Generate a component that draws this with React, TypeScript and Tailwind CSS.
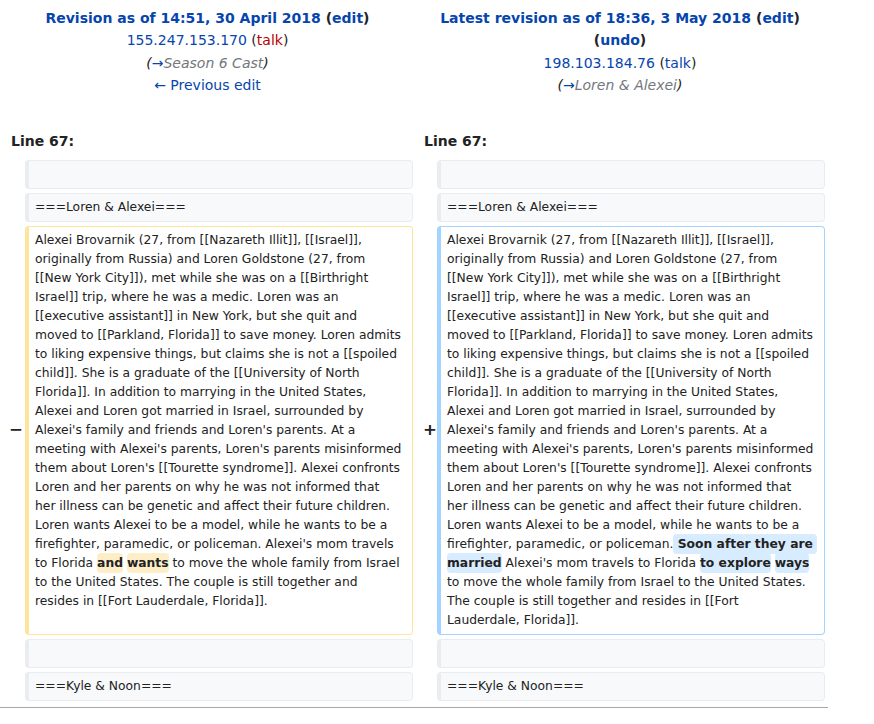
import type { ReactNode } from "react";

const LINK = "text-[#0645ad]";

const BOX =
  "rounded-[4px] border border-l-4 px-[6px] py-[4px] text-[12.32px] leading-[19px]";

function Del({ children }: { children: ReactNode }) {
  return (
    <span className="rounded-[4px] bg-[#feeec8] py-[3px] font-bold">
      {children}
    </span>
  );
}

function Ins({ children }: { children: ReactNode }) {
  return (
    <span className="rounded-[4px] bg-[#d8ecff] py-[3px] font-bold">
      {children}
    </span>
  );
}

function Context({ text }: { text?: string }) {
  return (
    <div className={`${BOX} min-h-[29px] whitespace-pre border-[#eaecf0] bg-[#f8f9fa] text-[#222]`}>
      {text}
    </div>
  );
}

// wrapped the way the wiki diff wraps them
const SHARED = [
  "Alexei Brovarnik (27, from [[Nazareth Illit]], [[Israel]],",
  "originally from Russia) and Loren Goldstone (27, from",
  "[[New York City]]), met while she was on a [[Birthright",
  "Israel]] trip, where he was a medic. Loren was an",
  "[[executive assistant]] in New York, but she quit and",
  "moved to [[Parkland, Florida]] to save money. Loren admits",
  "to liking expensive things, but claims she is not a [[spoiled",
  "child]]. She is a graduate of the [[University of North",
  "Florida]]. In addition to marrying in the United States,",
  "Alexei and Loren got married in Israel, surrounded by",
  "Alexei's family and friends and Loren's parents. At a",
  "meeting with Alexei's parents, Loren's parents misinformed",
  "them about Loren's [[Tourette syndrome]]. Alexei confronts",
  "Loren and her parents on why he was not informed that",
  "her illness can be genetic and affect their future children.",
  "Loren wants Alexei to be a model, while he wants to be a",
];

const OLD_LINES: ReactNode[] = [
  ...SHARED,
  "firefighter, paramedic, or policeman. Alexei's mom travels",
  <>
    to Florida <Del>and</Del> <Del>wants</Del> to move the whole family from Israel
  </>,
  "to the United States. The couple is still together and",
  "resides in [[Fort Lauderdale, Florida]].",
];

const NEW_LINES: ReactNode[] = [
  ...SHARED,
  <>
    firefighter, paramedic, or policeman.<Ins> Soon after they are </Ins>
  </>,
  <>
    <Ins>married</Ins> Alexei's mom travels to Florida <Ins>to explore</Ins>{" "}
    <Ins>ways</Ins>
  </>,
  "to move the whole family from Israel to the United States.",
  "The couple is still together and resides in [[Fort",
  "Lauderdale, Florida]].",
];

function Changed({ lines, border }: { lines: ReactNode[]; border: string }) {
  return (
    <div className={`${BOX} ${border} bg-white text-[#222]`}>
      {lines.map((line, i) => (
        <div key={i} className="whitespace-pre">
          {line}
        </div>
      ))}
    </div>
  );
}

export default function App() {
  return (
    <div className="min-h-[724px] w-[874px] bg-white font-['DejaVu_Sans',sans-serif] text-[#222]">
      <div className="w-[828px] border-b border-[#a2a9b1] pb-[6px]">
        <div className="grid grid-cols-[25px_388px_24px_388px] gap-y-[4px]">
          {/* revision headers */}
          <div className="col-span-2 pl-[2px] pt-[7px] text-center text-[14px] leading-[22.4px]">
            <div className="font-bold">
              <span className={LINK}>Revision as of 14:51, 30 April 2018</span> (
              <span className={LINK}>edit</span>)
            </div>
            <div>
              <span className={LINK}>155.247.153.170</span> (
              <span className="text-[#ba0000]">talk</span>)
            </div>
            <div className="italic">
              (<span className={LINK}>→</span>
              <span className="text-[#72777d]">Season 6 Cast</span>)
            </div>
            <div className={LINK}>← Previous edit</div>
          </div>
          <div className="col-span-2 pl-[2px] pt-[7px] text-center text-[14px] leading-[22.4px]">
            <div className="font-bold">
              <span className={LINK}>Latest revision as of 18:36, 3 May 2018</span> (
              <span className={LINK}>edit</span>)
            </div>
            <div className="font-bold">
              (<span className={LINK}>undo</span>)
            </div>
            <div>
              <span className={LINK}>198.103.184.76</span> (
              <span className={LINK}>talk</span>)
            </div>
            <div className="italic">
              (<span className={LINK}>→</span>
              <span className="text-[#72777d]">Loren &amp; Alexei</span>)
            </div>
          </div>

          {/* line numbers */}
          <div className="col-span-2 pb-[5px] pl-[11px] pt-[30px] text-[14px] font-bold leading-[20px]">
            Line 67:
          </div>
          <div className="col-span-2 pb-[5px] pl-[11px] pt-[30px] text-[14px] font-bold leading-[20px]">
            Line 67:
          </div>

          <div />
          <Context />
          <div />
          <Context />

          <div />
          <Context text="===Loren & Alexei===" />
          <div />
          <Context text="===Loren & Alexei===" />

          <div className="flex items-center justify-end pr-[2px] text-[16.6px] font-bold">
            −
          </div>
          <Changed lines={OLD_LINES} border="border-[#ffe49c]" />
          <div className="flex items-center justify-end text-[16.6px] font-bold">
            +
          </div>
          <Changed lines={NEW_LINES} border="border-[#a3d3ff]" />

          <div />
          <Context />
          <div />
          <Context />

          <div />
          <Context text="===Kyle & Noon===" />
          <div />
          <Context text="===Kyle & Noon===" />
        </div>
      </div>
    </div>
  );
}
